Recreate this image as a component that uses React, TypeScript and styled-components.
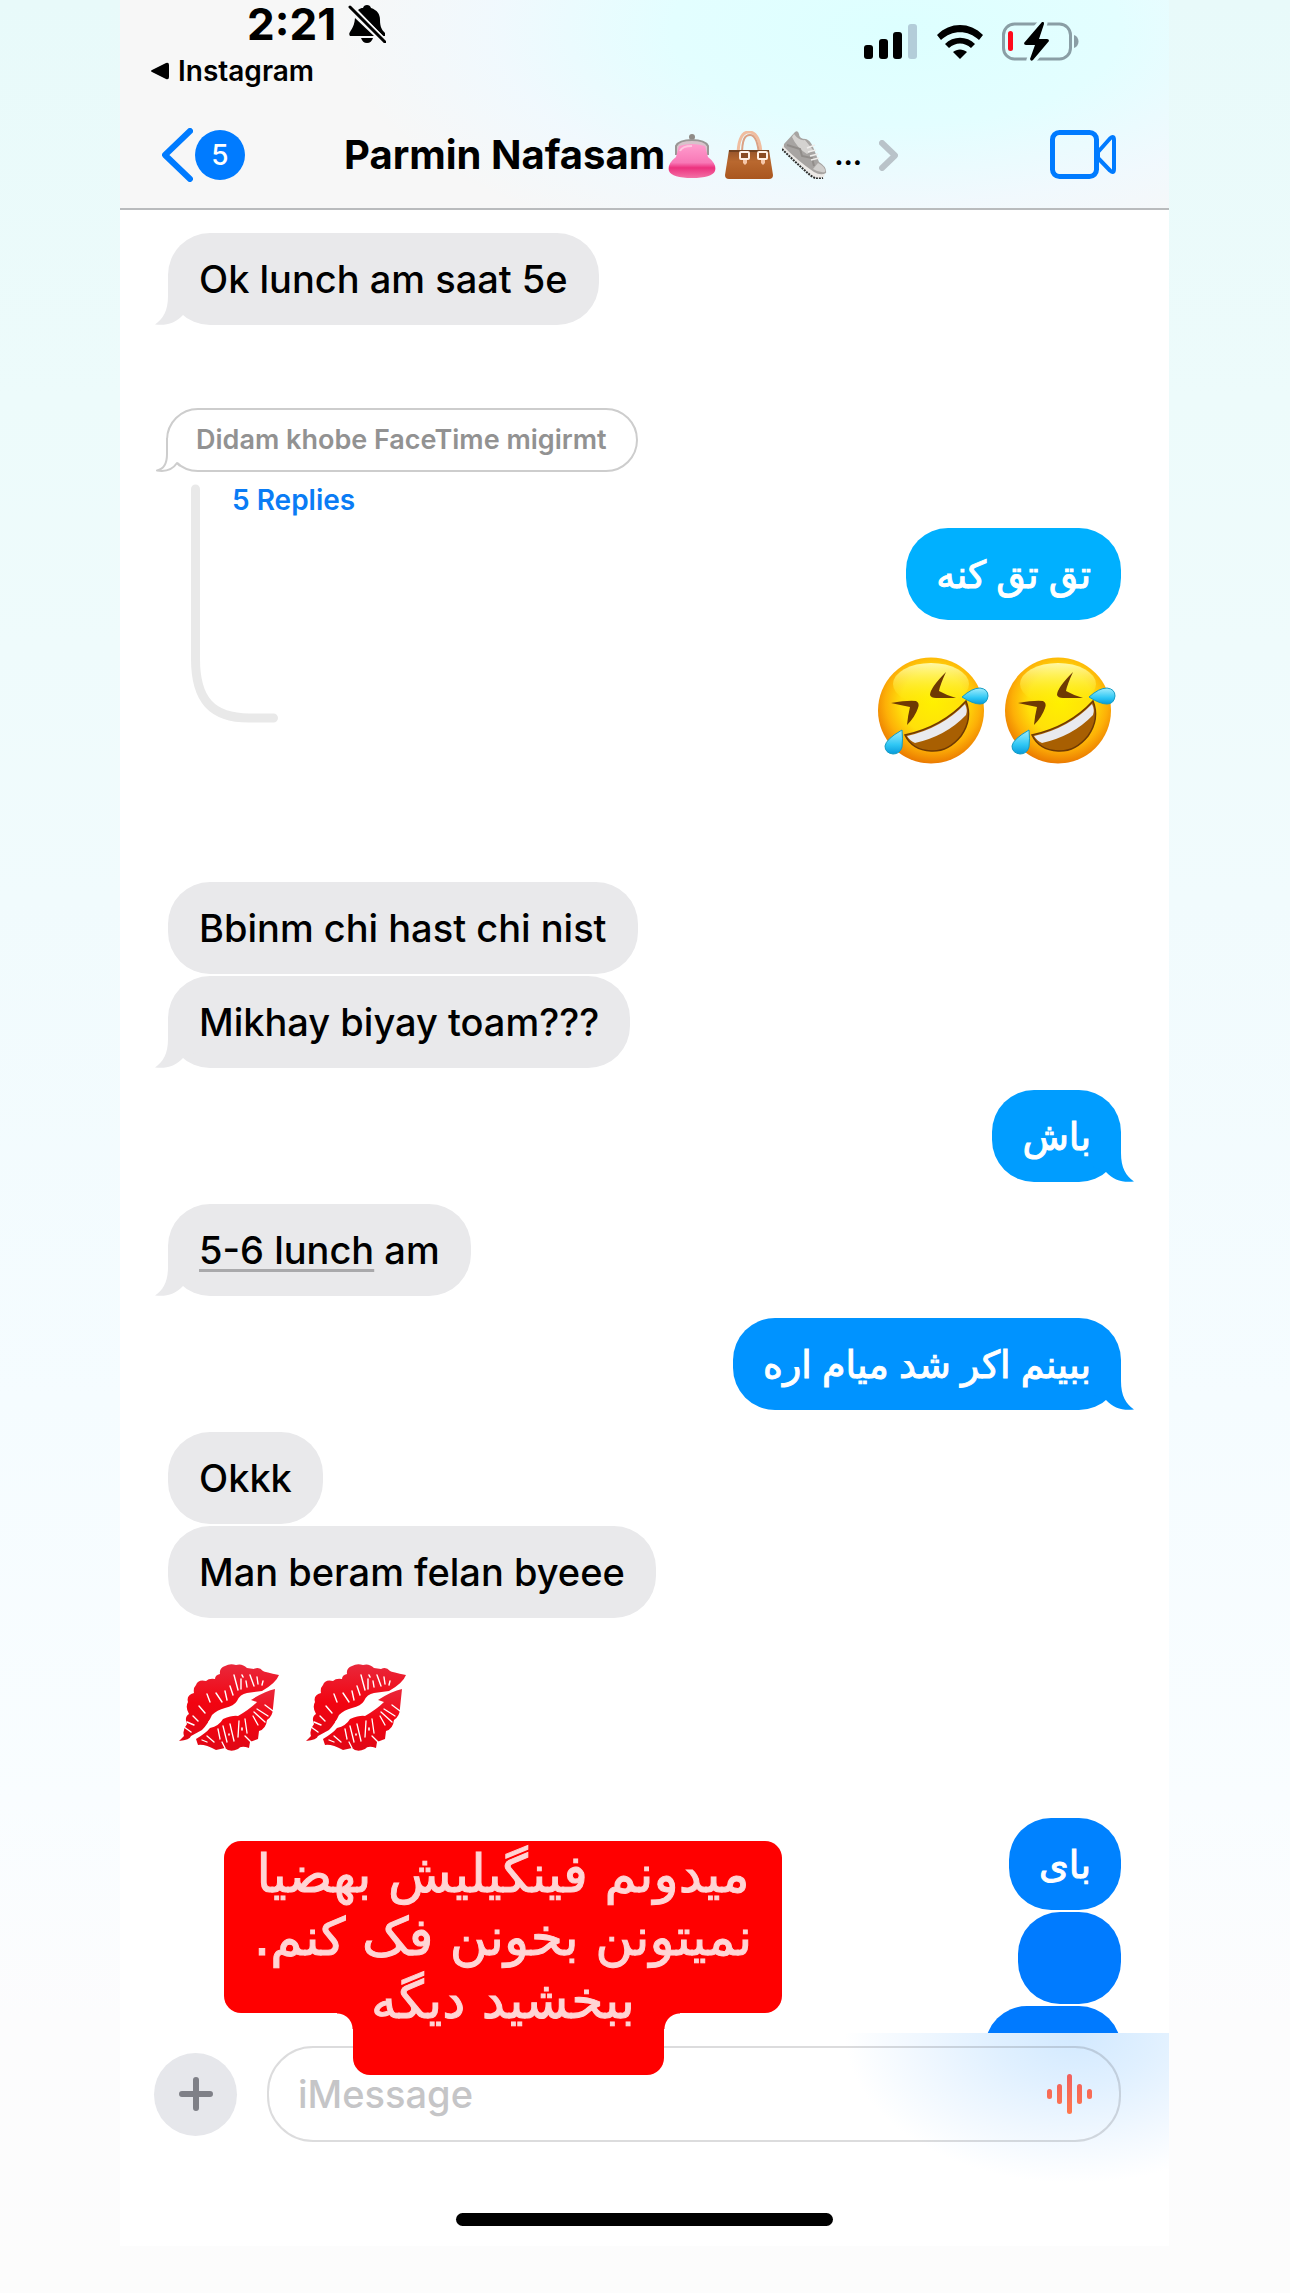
import React from "react";
import styled, { createGlobalStyle } from "styled-components";

const GlobalStyle = createGlobalStyle`
  *, *::before, *::after { box-sizing: border-box; }
  body {
    margin: 0;
    background: linear-gradient(180deg, #e8fafa 0, #edfbfb 400px, #f1fbfd 900px, #f5fcff 1400px, #f9fdff 1800px, #fcfcfd 2020px, #fcfcfc 100%);
    font-family: Inter, "DejaVu Sans", sans-serif;
    color: #000;
  }
  button { border: 0; padding: 0; margin: 0; background: none; font: inherit; color: inherit; }
  svg { display: block; flex: none; }
`;

const Page = styled.div`
  min-height: 100vh;
  padding: 0 121px 46px 120px;
`;

const Phone = styled.main`
  position: relative;
  display: flex;
  flex-direction: column;
  background: #fff;
`;

const Header = styled.header`
  border-bottom: 2px solid #b9bbbd;
  background:
    radial-gradient(ellipse 560px 240px at 74% 14%, #ddffff 0%, #e3feff 40%, rgba(240, 249, 254, 0.9) 72%, rgba(247, 247, 247, 0) 100%),
    #f7f7f7;
`;

const StatusBar = styled.div`
  display: flex;
  justify-content: space-between;
  align-items: flex-start;
  padding: 2px 90px 0 31px;
`;

const StatusLeft = styled.div`
  display: flex;
  flex-direction: column;
  gap: 9px;
`;

const Clock = styled.div`
  display: flex;
  align-items: center;
  gap: 12px;
  padding-left: 96px;
  font-size: 44px;
  line-height: 44px;
  font-weight: 700;
`;

const ReturnLink = styled.a`
  display: flex;
  align-items: center;
  gap: 9px;
  font-size: 28px;
  line-height: 32px;
  font-weight: 600;
  color: #000;
  text-decoration: none;
`;

const StatusIcons = styled.div`
  display: flex;
  align-items: center;
  gap: 19px;
  padding-top: 20px;
`;

const Nav = styled.nav`
  display: flex;
  align-items: center;
  height: 80px;
  margin: 28px 52px 13px 42px;
`;

const BackButton = styled.button`
  display: flex;
  align-items: center;
  gap: 2px;
`;

const Unread = styled.span`
  display: grid;
  place-items: center;
  width: 50px;
  height: 50px;
  border-radius: 50%;
  background: #007bff;
  color: #fff;
  font-size: 28px;
  font-weight: 500;
`;

const Contact = styled.button`
  display: flex;
  align-items: center;
  margin: 0 auto 0 99px;
  font-size: 40px;
  line-height: 48px;
  font-weight: 700;
`;

const ContactEmoji = styled.span`
  display: flex;
  align-items: flex-end;
  gap: 9px;
  margin: 0 7px 0 3px;
`;

const ContactMore = styled.span`
  display: flex;
  align-items: center;
  gap: 17px;
  font-size: 28px;
`;

const Thread = styled.section`
  display: flex;
  flex-direction: column;
  padding: 23px 48px 0;
`;

const Row = styled.div<{ $gap: number; $mine?: boolean }>`
  display: flex;
  justify-content: ${(p) => (p.$mine ? "flex-end" : "flex-start")};
  margin-top: ${(p) => p.$gap}px;
`;

const Bubble = styled.div<{ $tone?: string; $width?: number }>`
  position: relative;
  min-width: ${(p) => (p.$width ? p.$width + "px" : "0")};
  height: 92px;
  padding: 0 ${(p) => (p.$tone ? "30px" : "31px")};
  border-radius: 42px;
  background: ${(p) => p.$tone ?? "#e9e9eb"};
  color: ${(p) => (p.$tone ? "#fff" : "#000")};
  font-size: 38px;
  line-height: 92px;
  font-weight: 500;
  white-space: nowrap;
  ${(p) => p.$tone && "-webkit-text-stroke: 1px #fff;"}
`;

const TailBox = styled.svg<{ $mine?: boolean }>`
  position: absolute;
  bottom: 0;
  ${(p) => (p.$mine ? "right: -14px; transform: scaleX(-1);" : "left: -14px;")}
`;

const Detected = styled.span`
  text-decoration: underline;
  text-decoration-color: #a9a9ab;
  text-decoration-thickness: 3px;
  text-underline-offset: 5px;
  text-decoration-skip-ink: none;
`;

const Quoted = styled.div`
  position: relative;
  height: 64px;
  margin-left: -2px;
  padding: 0 29px 0 28px;
  border: 2px solid #cdcdcd;
  border-radius: 32px;
  color: #929292;
  font-size: 27px;
  line-height: 60px;
  font-weight: 600;
`;

const QuotedTail = styled.svg`
  position: absolute;
  left: -14px;
  bottom: -2px;
`;

const ReplyBlock = styled.div`
  display: flex;
  align-items: flex-start;
  margin: 12px 0 0 23px;
`;

const ReplyLine = styled.div`
  width: 87px;
  height: 239px;
`;

const RepliesLink = styled.a`
  margin-left: -46px;
  font-size: 28px;
  line-height: 32px;
  font-weight: 600;
  color: #0a7cf5;
  text-decoration: none;
`;

const ReplyColumn = styled.div`
  display: flex;
  flex-direction: column;
  align-items: flex-end;
  gap: 37px;
  margin-left: auto;
  padding-top: 44px;
`;

const EmojiRow = styled.div<{ $inset?: "left" | "right" }>`
  display: flex;
  gap: ${(p) => (p.$inset === "left" ? "27px" : "16px")};
  ${(p) => (p.$inset === "left" ? "margin-left: 11px;" : "margin-right: 5px;")}
`;

const Peek = styled.div`
  height: 27px;
  overflow: hidden;
`;

const Composer = styled.footer`
  padding: 13px 0 20px;
  background: radial-gradient(ellipse 230px 150px at 91% 0, #d2e9ff 0%, #e0f0ff 35%, #f1f8ff 70%, rgba(255, 255, 255, 0) 100%), #fff;
`;

const ComposerRow = styled.form`
  display: flex;
  align-items: center;
  gap: 30px;
  padding: 0 48px 0 34px;
`;

const PlusButton = styled.button`
  display: grid;
  place-items: center;
  flex: none;
  width: 83px;
  height: 83px;
  border-radius: 50%;
  background: #e6e7eb;
`;

const Field = styled.label`
  display: flex;
  flex: 1;
  align-items: center;
  min-width: 0;
  height: 96px;
  padding: 0 26px 0 29px;
  border: 2px solid rgba(60, 60, 67, 0.18);
  border-radius: 46px;
`;

const TextInput = styled.input`
  flex: 1;
  min-width: 0;
  padding: 0;
  border: 0;
  outline: 0;
  background: transparent;
  font-family: Inter, sans-serif;
  font-size: 38px;
  font-weight: 500;
  &::placeholder { color: #c5c5c7; opacity: 1; }
`;

const HomeBar = styled.div`
  width: 377px;
  height: 13px;
  margin: 71px auto 0;
  border-radius: 7px;
  background: #000;
`;

const Sticker = styled.aside`
  position: absolute;
  left: 104px;
  bottom: 171px;
  width: 558px;
  height: 234px;
  padding-top: 2px;
  text-align: center;
  color: #ffd5d5;
  font-family: "DejaVu Sans", sans-serif;
  font-size: 52px;
  line-height: 63px;
  -webkit-text-stroke: 1px #ffd5d5;

  &::before, &::after {
    content: "";
    position: absolute;
    z-index: 0;
    background: #f00;
  }
  &::before { inset: 0 0 62px; border-radius: 17px; }
  &::after { left: 129px; right: 118px; top: 150px; bottom: 0; border-radius: 0 0 17px 17px; }
`;

const StickerLine = styled.div`
  position: relative;
  z-index: 1;
  white-space: nowrap;
`;

const InnerCorner = styled.span<{ $side: "left" | "right" }>`
  position: absolute;
  top: 172px;
  width: 16px;
  height: 16px;
  ${(p) => (p.$side === "left" ? "left: 113px;" : "right: 102px;")}
  background: radial-gradient(circle at ${(p) => (p.$side === "left" ? "0" : "100%")} 100%, transparent 15px, #f00 16px);
`;

const Tail = ({ color, mine }: { color: string; mine?: boolean }) => (
  <TailBox $mine={mine} width="44" height="50" viewBox="0 0 44 50" aria-hidden="true">
    <path d="M14 0V21C14 36 9 44 1 49.500C12 51 22 48 29 40L44 34V0Z" fill={color} />
  </TailBox>
);

const BellSlash = () => (
  <svg width="38" height="38" viewBox="0 0 38 38">
    <path d="M19 0C21 0 22.500 1 23 3C29 5 32 9 32 15C32 22 34 25 37 28V31H35L10 5C12 3.500 13 3 15 3C15.500 1 17 0 19 0Z" />
    <path d="M7 13L26 31H2C-1 27 6 26 7 13Z" />
    <path d="M13 33H25C24 36 22 38 19 38S14 36 13 33Z" />
    <path d="M2 2L37 37" stroke="#f7f7f7" strokeWidth="6" />
    <path d="M2 2L37 37" stroke="#000" strokeWidth="3" strokeLinecap="round" />
  </svg>
);

const Signal = () => (
  <svg width="54" height="35" viewBox="0 0 54 35">
    <rect x="0" y="21" width="9" height="14" rx="3" />
    <rect x="15" y="15" width="9" height="20" rx="3" />
    <rect x="29" y="8" width="9" height="27" rx="3" />
    <rect x="44" y="0" width="9" height="35" rx="3" fill="#b3cdd9" />
  </svg>
);

const Wifi = () => (
  <svg width="46" height="34" viewBox="0 0 46 34">
    <path d="M0 10C13 -3.300 33 -3.300 46 10L42 15C31 4.500 15 4.500 4 15Z" />
    <path d="M8 19C16 10.500 30 10.500 38 19L34 23C27.500 17 18.500 17 12 23Z" />
    <path d="M16 27C20 23.500 26 23.500 30 27L23 34Z" />
  </svg>
);

const Battery = () => (
  <svg width="77" height="39" viewBox="0 -1 77 39">
    <rect x="1.500" y="1" width="67" height="35" rx="11" fill="none" stroke="#8a9ea5" strokeWidth="3" />
    <path d="M72 12C78 14 78 23 72 25Z" fill="#8a9ea5" />
    <rect x="6" y="8" width="5" height="20" rx="2.500" fill="#ff0a1c" />
    <path d="M40 -1L22 20Q22 22 24 22H33L28 37Q29 39 31 37L47 18Q47 16 45 16H37L42 0Q42 -2 40 -1Z" fill="#e1feff" stroke="#e1feff" strokeWidth="7" />
    <path d="M40 -1L22 20Q22 22 24 22H33L28 36Q29 39 31 37L47 18Q47 16 45 16H37L42 1Q42 -2 40 -1Z" />
  </svg>
);

const Purse = () => (
  <svg width="48" height="45" viewBox="0 0 48 45">
    <defs>
      <linearGradient id="purse" x1="0" y1="0" x2="0" y2="1">
        <stop offset="0" stopColor="#ff9dce" />
        <stop offset=".55" stopColor="#f878b6" />
        <stop offset=".7" stopColor="#ec317e" />
        <stop offset="1" stopColor="#f372a6" />
      </linearGradient>
    </defs>
    <circle cx="24" cy="3" r="3" fill="#8f8b87" />
    <path d="M8 20V12Q11 6 24 6T40 12V20Z" fill="#d7c3cb" stroke="#9a9695" strokeWidth="2" />
    <path d="M11 12Q24 8 37 12L40 23Q49 30 47 37Q44 44 24 44T1 37Q-1 30 8 23Z" fill="url(#purse)" />
    <path d="M12 17Q14 12 24 12" fill="none" stroke="#ffc4df" strokeWidth="2" />
  </svg>
);

const Handbag = () => (
  <svg width="48" height="48" viewBox="0 0 48 48">
    <defs>
      <linearGradient id="bag" x1="0" y1="0" x2="0" y2="1">
        <stop offset="0" stopColor="#94532a" />
        <stop offset=".4" stopColor="#b9682f" />
        <stop offset="1" stopColor="#a9561f" />
      </linearGradient>
    </defs>
    <path d="M13 26C13 8 17 1 24 1S36 9 36 26" fill="none" stroke="#f0bd9f" strokeWidth="3" />
    <path d="M17 24C17 8 20 4 25 4S33 12 34 24" fill="none" stroke="#dba184" strokeWidth="2" />
    <path d="M4 19H44L48 44Q48 48 44 48H4Q0 48 0 44Z" fill="url(#bag)" />
    <path d="M4 20H44" stroke="#71401f" strokeWidth="2" />
    <g fill="#8a4b24" stroke="#fff0e6" strokeWidth="2">
      <rect x="15" y="21" width="9" height="7" rx="1" />
      <rect x="33" y="21" width="9" height="7" rx="1" />
    </g>
    <path d="M18 29H22V32L20 34L18 32ZM36 29H40V32L38 34L36 32Z" fill="#f5c6a8" />
  </svg>
);

const Sneaker = () => (
  <svg width="45" height="48" viewBox="0 0 45 48">
    <path d="M0 17Q15 32 29 44Q35 49 42 46L43 42L2 13Z" fill="#ece9e6" />
    <path d="M0 18Q14 32 28 44Q34 49 41 47" fill="none" stroke="#2e2d2c" strokeWidth="2" strokeDasharray="2 1" />
    <path d="M2 13L13 1Q16 -1 17 3Q17 8 24 8Q28 9 31 16L37 31Q45 36 44 42Q39 45 32 41Q16 30 2 16Z" fill="#a7a4a2" />
    <path d="M12 3Q17 10 23 9L31 19L25 23Q15 17 10 6Z" fill="#d4d2d0" />
    <path d="M36 32Q44 36 43 41Q37 42 31 38Z" fill="#d0cecc" />
    <path d="M5 14L18 18L20 25L30 27L32 35" fill="none" stroke="#918d8a" strokeWidth="2" />
    <path d="M25 17L33 14M26 21L34 19M28 25L36 23M29 29L37 27" stroke="#efedeb" strokeWidth="1.500" />
  </svg>
);

const VideoIcon = () => (
  <svg width="67" height="50" viewBox="0 0 67 50" fill="none" stroke="#007bff" strokeWidth="5" strokeLinejoin="round">
    <rect x="2.500" y="2.500" width="44" height="44" rx="7" />
    <path d="M48 22L60 8.500Q64 5 64 10V39Q64 44 60 40.500L48 28Z" strokeWidth="4" />
  </svg>
);

const Rofl = () => (
  <svg width="111" height="108" viewBox="0 0 111 108" role="img" aria-label="Rolling on the floor laughing">
    <defs>
      <radialGradient id="face" cx=".52" cy=".42" r=".6">
        <stop offset="0" stopColor="#fff000" />
        <stop offset=".5" stopColor="#ffe00a" />
        <stop offset=".75" stopColor="#fdb007" />
        <stop offset="1" stopColor="#e87200" />
      </radialGradient>
      <linearGradient id="shine" x1="0" y1="0" x2="0" y2="1">
        <stop offset="0" stopColor="#fffbb0" stopOpacity=".95" />
        <stop offset="1" stopColor="#fff200" stopOpacity="0" />
      </linearGradient>
      <linearGradient id="tear" x1="0" y1="0" x2="0" y2="1">
        <stop offset="0" stopColor="#a3edfc" />
        <stop offset=".6" stopColor="#31c8f5" />
        <stop offset="1" stopColor="#079bdc" />
      </linearGradient>
    </defs>
    <circle cx="53" cy="53.500" r="53" fill="url(#face)" />
    <ellipse cx="53" cy="27" rx="38" ry="21" fill="url(#shine)" />
    <g fill="#6e3903">
      <path d="M68 15Q52 31 52 38Q53 41 58 41L78 41Q68 38 61 34Q62 28 68 15Z" />
      <path d="M13 46Q30 43 38 44Q42 46 40 51Q37 60 29 68Q30 58 32 50Q22 48 13 46Z" />
    </g>
    <path d="M27 78Q64 70 88 44Q95 62 83 79Q70 95 53 94Q34 93 27 78Z" fill="#a85f02" stroke="#6e3903" strokeWidth="1.500" />
    <path d="M29 79Q64 71 87 47Q90 53 88 58Q68 79 37 86Q32 84 29 79Z" fill="#e9eaee" />
    <path d="M84 40Q94 31 102 31Q110 32 110 39Q109 47 102 47Q95 47 84 40Z" fill="url(#tear)" stroke="#139cc4" />
    <path d="M24 73Q25 82 24 90Q22 97 15 97Q7 96 7 89Q8 82 24 73Z" fill="url(#tear)" stroke="#139cc4" />
  </svg>
);

const Kiss = () => (
  <svg width="100" height="87" viewBox="0 0 100 87" role="img" aria-label="Kiss mark">
    <defs>
      <linearGradient id="lips" x1="0" y1="0" x2="0" y2="1">
        <stop offset="0" stopColor="#e9283b" />
        <stop offset=".5" stopColor="#f20411" />
        <stop offset="1" stopColor="#df0715" />
      </linearGradient>
    </defs>
    <path d="M100 11Q86 8 84 7Q80 2 75 5L68 4Q63 -1 57 1Q51 -1 46 2Q40 4 41 10Q36 11 36 15Q30 14 27 17Q19 15 17 21Q14 24 15 29Q7 31 9 38Q6 43 10 50Q5 53 8 60Q3 66 5 72L0 77Q11 76 12 72L23 66Q29 60 33 51Q38 46 46 44Q55 42 58 37Q61 30 68 29L83 27Q97 19 100 11Z" fill="url(#lips)" />
    <path d="M96 25L94 44Q94 52 88 56Q87 65 80 67L79 75L71 78L70 84Q62 81 59 85Q51 89 46 84L37 86Q26 80 19 81L17 75Q27 69 31 64Q40 62 44 55Q54 51 59 52Q71 45 78 38L72 36Q86 27 96 25Z" fill="url(#lips)" />
    <g fill="none" stroke="#fff" strokeLinecap="round">
      <path d="M55 11L59 26M51 22L54 31M62 15L62 25M67 17L68 23M71 11L75 22M78 13L79 20M46 27L48 36M37 29L43 38M28 30L31 38M20 42L26 49M14 52L19 57M8 58L15 61M5 63L12 68M84 17L83 21" strokeWidth="1.400" />
      <path d="M78 45L89 52M75 48L86 58M74 52L79 61M66 55L68 69M60 57L59 73M51 60L55 77M44 62L48 78M39 65L41 75M28 72L35 78M23 76L28 78M43 78L46 84M66 72L73 79M86 41L94 47" strokeWidth="1.300" />
      <path d="M63 11L64 13M30 58L32 56M50 70L50 71M63 64L63 66" strokeWidth="1.600" />
    </g>
  </svg>
);

const VoiceBars = () => (
  <svg width="46" height="40" viewBox="0 0 46 40">
    <defs>
      <linearGradient id="voice" gradientUnits="userSpaceOnUse" x1="0" y1="0" x2="0" y2="40">
        <stop offset="0" stopColor="#f0605f" />
        <stop offset="1" stopColor="#ff784d" />
      </linearGradient>
    </defs>
    <g fill="url(#voice)">
      <rect x="0" y="15" width="5" height="10" rx="2.500" />
      <rect x="10" y="10" width="5" height="20" rx="2.500" />
      <rect x="20" y="0" width="5" height="40" rx="2.500" />
      <rect x="30" y="10" width="5" height="20" rx="2.500" />
      <rect x="40" y="15" width="5" height="10" rx="2.500" />
    </g>
  </svg>
);

type MessageProps = {
  gap: number;
  tone?: string;
  tail?: boolean;
  width?: number;
  children?: React.ReactNode;
};

const Message = ({ gap, tone, tail, width, children }: MessageProps) => (
  <Row $gap={gap} $mine={!!tone}>
    <Bubble $tone={tone} $width={width} dir={tone ? "rtl" : "ltr"} lang={tone ? "fa" : undefined}>
      {children}
      {tail && <Tail color={tone ?? "#e9e9eb"} mine={!!tone} />}
    </Bubble>
  </Row>
);

export default function App() {
  return (
    <>
      <GlobalStyle />
      <Page>
        <Phone>
          <Header>
            <StatusBar>
              <StatusLeft>
                <Clock>
                  2:21
                  <BellSlash />
                </Clock>
                <ReturnLink href="#instagram">
                  <svg width="18" height="18" viewBox="0 0 18 18">
                    <path d="M1 8L15 1Q18 0 18 3V15Q18 18 15 17L1 10Q-1 9 1 8Z" />
                  </svg>
                  Instagram
                </ReturnLink>
              </StatusLeft>
              <StatusIcons>
                <Signal />
                <Wifi />
                <Battery />
              </StatusIcons>
            </StatusBar>
            <Nav>
              <BackButton aria-label="Back, 5 unread">
                <svg width="31" height="54" viewBox="0 0 31 54" fill="none" stroke="#007bff" strokeWidth="6" strokeLinecap="round" strokeLinejoin="round">
                  <path d="M28 3L3 27L28 51" />
                </svg>
                <Unread>5</Unread>
              </BackButton>
              <Contact>
                Parmin Nafasam
                <ContactEmoji>
                  <Purse />
                  <Handbag />
                  <Sneaker />
                </ContactEmoji>
                <ContactMore>
                  ...
                  <svg width="19" height="31" viewBox="0 0 19 31" fill="none" stroke="#b9c3c9" strokeWidth="6" strokeLinecap="round" strokeLinejoin="round">
                    <path d="M3 3L16 15.500L3 28" />
                  </svg>
                </ContactMore>
              </Contact>
              <button aria-label="Video call">
                <VideoIcon />
              </button>
            </Nav>
          </Header>

          <Thread>
            <Message gap={0} tail>Ok lunch am saat 5e</Message>
            <Row $gap={83}>
              <Quoted>
                Didam khobe FaceTime migirmt
                <QuotedTail width="34" height="34" viewBox="0 0 34 34" aria-hidden="true">
                  <path d="M13 0V16C13 26 10 31 3 32.500C12 34 19 31 23 25L32 18V0Z" fill="#fff" />
                  <path d="M13 0V16C13 26 10 31 3 32.500C12 34 19 31 23 25L26 28" fill="none" stroke="#cdcdcd" strokeWidth="2" strokeLinejoin="round" />
                </QuotedTail>
              </Quoted>
            </Row>
            <ReplyBlock>
              <ReplyLine>
                <svg width="87" height="239" viewBox="0 0 87 239" fill="none" stroke="#e9e9e9" strokeWidth="9" strokeLinecap="round">
                  <path d="M4.500 5V175C4.500 216 21 234 58 234H82.500" />
                </svg>
              </ReplyLine>
              <RepliesLink href="#replies">5 Replies</RepliesLink>
              <ReplyColumn>
                <Bubble $tone="#00b0ff" dir="rtl" lang="fa">تق تق کنه</Bubble>
                <EmojiRow $inset="right">
                  <Rofl />
                  <Rofl />
                </EmojiRow>
              </ReplyColumn>
            </ReplyBlock>
            <Message gap={117}>Bbinm chi hast chi nist</Message>
            <Message gap={2} tail>Mikhay biyay toam???</Message>
            <Message gap={22} tone="#009dff" tail>باش</Message>
            <Message gap={22} tail>
              <Detected>5-6 lunch</Detected> am
            </Message>
            <Message gap={22} tone="#0093ff" tail>ببینم اکر شد میام اره</Message>
            <Message gap={22}>Okkk</Message>
            <Message gap={2}>Man beram felan byeee</Message>
            <Row $gap={46}>
              <EmojiRow $inset="left">
                <Kiss />
                <Kiss />
              </EmojiRow>
            </Row>
            <Message gap={67} tone="#0082ff">بای</Message>
            <Message gap={2} tone="#007bff" width={103} />
            <Row $gap={2} />
            <Peek>
              <Message gap={0} tone="#007aff" width={136} />
            </Peek>
          </Thread>

          <Composer>
            <ComposerRow onSubmit={(e) => e.preventDefault()}>
              <PlusButton type="button" aria-label="Add">
                <svg width="34" height="34" viewBox="0 0 34 34" stroke="#7f8087" strokeWidth="6" strokeLinecap="round">
                  <path d="M17 3V31M3 17H31" />
                </svg>
              </PlusButton>
              <Field>
                <TextInput type="text" placeholder="iMessage" aria-label="iMessage" />
                <button type="button" aria-label="Record voice message">
                  <VoiceBars />
                </button>
              </Field>
            </ComposerRow>
            <HomeBar />
          </Composer>

          <Sticker dir="rtl" lang="fa">
            <InnerCorner $side="left" />
            <InnerCorner $side="right" />
            <StickerLine>میدونم فینگیلیش بهضیا</StickerLine>
            <StickerLine>نمیتونن بخونن فک کنم.</StickerLine>
            <StickerLine>ببخشید دیگه</StickerLine>
          </Sticker>
        </Phone>
      </Page>
    </>
  );
}
